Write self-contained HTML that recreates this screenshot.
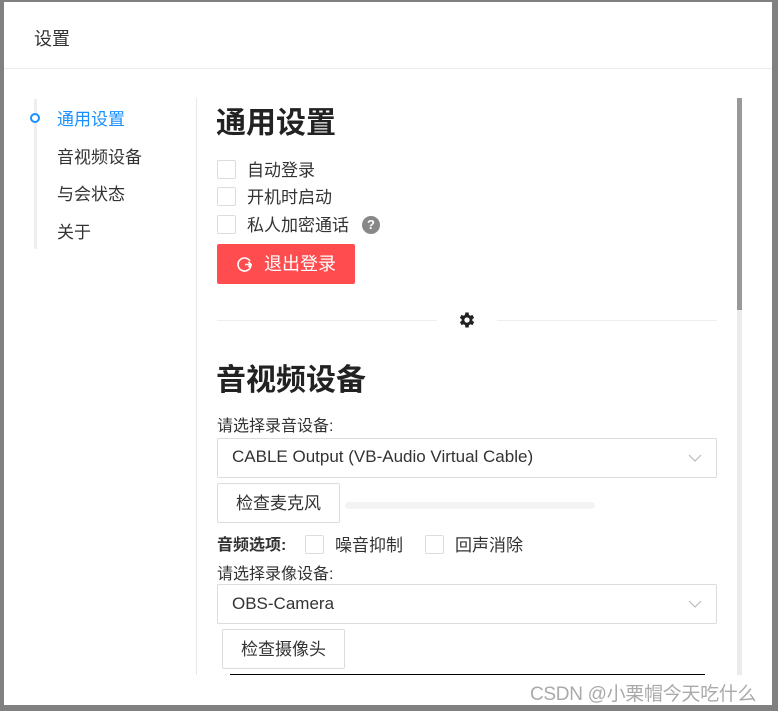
<!DOCTYPE html>
<html><head><meta charset="utf-8"><style>
*{margin:0;padding:0;box-sizing:border-box}
body{width:778px;height:711px;background:#808080;position:relative;overflow:hidden;font-family:"Liberation Sans","Noto Sans CJK SC",sans-serif;color:#333}
.a{position:absolute}
.dlg{left:4px;top:2px;width:768px;height:703px;background:#fff}
.cb{width:19px;height:19px;border:1px solid #dcdcdc;border-radius:2px;background:#fff}
.t{font-size:17px;color:#333;white-space:nowrap}
.sel{border:1px solid #dcdcdc;border-radius:2px;height:40px;width:500px;left:217px}
.btn{border:1px solid #dcdcdc;border-radius:2px;background:#fff;font-size:17px;text-align:center;color:#333}
</style></head><body>
<div class="a dlg"></div>
<div class="a t" style="left:34px;top:25px;font-size:18px">设置</div>
<div class="a" style="left:4px;top:68px;width:768px;height:1px;background:#ebebeb"></div>
<div class="a" style="left:34px;top:99px;width:3px;height:150px;background:#eee"></div>
<div class="a" style="left:30px;top:113px;width:10px;height:10px;border:2px solid #1890ff;border-radius:50%;background:#fff"></div>
<div class="a t" style="left:57px;top:105px;color:#1890ff">通用设置</div>
<div class="a t" style="left:57px;top:143px">音视频设备</div>
<div class="a t" style="left:57px;top:180px">与会状态</div>
<div class="a t" style="left:57px;top:218px">关于</div>
<div class="a" style="left:196px;top:98px;width:1px;height:577px;background:#e8e8e8"></div>
<div class="a" style="left:216px;top:98px;font-size:30px;font-weight:bold;color:#222">通用设置</div>
<div class="a cb" style="left:217px;top:160px"></div><div class="a t" style="left:247px;top:156px">自动登录</div>
<div class="a cb" style="left:217px;top:187px"></div><div class="a t" style="left:247px;top:183px">开机时启动</div>
<div class="a cb" style="left:217px;top:215px"></div><div class="a t" style="left:247px;top:211px">私人加密通话</div>
<div class="a" style="left:362px;top:216px;width:18px;height:18px;border-radius:50%;background:#888;color:#fff;font-size:13px;font-weight:bold;text-align:center;line-height:18px">?</div>
<div class="a" style="left:217px;top:244px;width:138px;height:40px;background:#ff4d4f;border-radius:2px;color:#fff;font-size:18px;line-height:40px;padding-left:47px">退出登录</div>
<svg class="a" style="left:236px;top:255px" width="18" height="18" viewBox="0 0 18 18"><path d="M14 6A6.5 6.5 0 1 0 15 10" fill="none" stroke="#fff" stroke-width="1.6"/><path d="M9 9.5H15M12.5 7L15 9.5 12.5 12" fill="none" stroke="#fff" stroke-width="1.6"/></svg>
<div class="a" style="left:217px;top:320px;width:220px;height:1px;background:#eee"></div>
<div class="a" style="left:497px;top:320px;width:220px;height:1px;background:#eee"></div>
<svg class="a" style="left:457px;top:310px" width="20" height="20" viewBox="0 0 24 24"><path fill="#222" d="M19.4 13a7.5 7.5 0 0 0 0-2l2.1-1.6-2-3.5-2.5 1a7 7 0 0 0-1.7-1L15 3h-4l-.4 2.9a7 7 0 0 0-1.7 1l-2.5-1-2 3.5L6.6 11a7.5 7.5 0 0 0 0 2l-2.1 1.6 2 3.5 2.5-1a7 7 0 0 0 1.7 1L11 21h4l.4-2.9a7 7 0 0 0 1.7-1l2.5 1 2-3.5zM13 15.2a3.2 3.2 0 1 1 0-6.4 3.2 3.2 0 0 1 0 6.4z" transform="translate(-1 0)"/></svg>
<div class="a" style="left:216px;top:355px;font-size:30px;font-weight:bold;color:#222">音视频设备</div>
<div class="a t" style="left:217px;top:412px;font-size:16px">请选择录音设备:</div>
<div class="a sel" style="top:438px"></div>
<div class="a t" style="left:232px;top:447px;font-size:17px">CABLE Output (VB-Audio Virtual Cable)</div>
<svg class="a" style="left:688px;top:453px" width="14" height="10"><path d="M1 2l6 6 6-6" fill="none" stroke="#bbb" stroke-width="1.2"/></svg>
<div class="a btn" style="left:217px;top:483px;width:123px;height:40px;line-height:40px">检查麦克风</div>
<div class="a" style="left:345px;top:502px;width:250px;height:7px;border-radius:4px;background:#f3f3f3"></div>
<div class="a t" style="left:217px;top:531px;font-weight:bold;font-size:16px">音频选项:</div>
<div class="a cb" style="left:305px;top:535px"></div><div class="a t" style="left:335px;top:531px">噪音抑制</div>
<div class="a cb" style="left:425px;top:535px"></div><div class="a t" style="left:455px;top:531px">回声消除</div>
<div class="a t" style="left:217px;top:560px;font-size:16px">请选择录像设备:</div>
<div class="a sel" style="top:584px"></div>
<div class="a t" style="left:232px;top:594px;font-size:17px">OBS-Camera</div>
<svg class="a" style="left:688px;top:599px" width="14" height="10"><path d="M1 2l6 6 6-6" fill="none" stroke="#bbb" stroke-width="1.2"/></svg>
<div class="a btn" style="left:222px;top:629px;width:123px;height:40px;line-height:40px">检查摄像头</div>
<div class="a" style="left:230px;top:674px;width:475px;height:1px;background:#000"></div>
<div class="a" style="left:737px;top:98px;width:5px;height:577px;background:#ebebeb"></div>
<div class="a" style="left:737px;top:98px;width:5px;height:212px;background:#999"></div>
<div class="a" style="left:530px;top:679px;font-size:19px;color:#aaa;white-space:nowrap;letter-spacing:-0.3px">CSDN @小栗帽今天吃什么</div>
</body></html>
